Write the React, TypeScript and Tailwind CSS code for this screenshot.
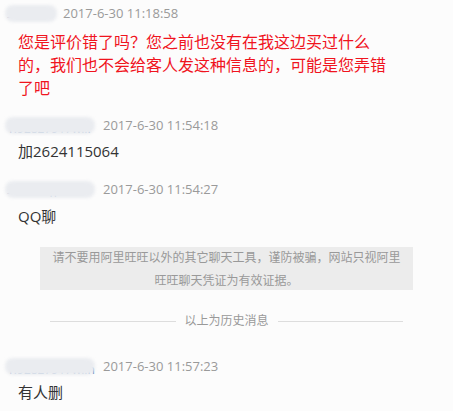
import React from "react";

const font = { fontFamily: '"Open Sans", "Noto Sans CJK SC", sans-serif' };

function Name({ wide, peek }: { wide: boolean; peek: string }) {
  return (
    <div className={`relative h-[28px] ${wide ? "w-[96px]" : "w-[56px]"} shrink-0`}>
      <div className="absolute left-[5px] bottom-[4px] text-[12px] leading-[14px] text-[#5b7fb5] whitespace-nowrap">
        {peek}
      </div>
      <div
        className={`absolute left-[3px] top-[5px] h-[17px] ${wide ? "w-[90px]" : "w-[52px]"} rounded-[8px] bg-[#eaecf0] blur-[1.5px]`}
      />
    </div>
  );
}

function Header({ wide, peek, time }: { wide: boolean; peek: string; time: string }) {
  return (
    <div className="flex items-center h-[28px] pl-[2px]">
      <Name wide={wide} peek={peek} />
      <span className="ml-[5px] text-[13px] text-[#9a9a9a]">{time}</span>
    </div>
  );
}

export default function App() {
  return (
    <div className="w-[453px] h-[411px] bg-[#fcfcfc] overflow-hidden" style={font}>
      <Header wide={false} peek="—— " time="2017-6-30 11:18:58" />
      <div className="mt-[3px] pl-[18px] text-[16px] leading-[23px] text-[#f0141e] whitespace-nowrap">
        <div>您是评价错了吗？您之前也没有在我这边买过什么</div>
        <div>的，我们也不会给客人发这种信息的，可能是您弄错</div>
        <div>了吧</div>
      </div>

      <div className="mt-[12px]">
        <Header wide={true} peek="1.92827917w..." time="2017-6-30 11:54:18" />
        <div className="pl-[18px] text-[15px] leading-[23px] text-[#333]">加2624115064</div>
      </div>

      <div className="mt-[13px]">
        <Header wide={true} peek="-----------n" time="2017-6-30 11:54:27" />
        <div className="mt-[1px] pl-[18px] text-[15px] leading-[23px] text-[#333]">QQ聊</div>
      </div>

      <div className="mt-[19px] mx-[40px] h-[43px] bg-[#ececec] flex flex-col justify-center items-center text-center text-[12px] leading-[23px] text-[#999]">
        <div>请不要用阿里旺旺以外的其它聊天工具，谨防被骗，网站只视阿里</div>
        <div>旺旺聊天凭证为有效证据。</div>
      </div>

      <div className="mt-[20px] flex items-center px-[50px] h-[22px]">
        <div className="flex-1 h-px bg-[#dddddd]" />
        <span className="px-[9px] text-[12px] text-[#999]">以上为历史消息</span>
        <div className="flex-1 h-px bg-[#dddddd]" />
      </div>

      <div className="mt-[21px]">
        <Header wide={true} peek="1.92827917w..n" time="2017-6-30 11:57:23" />
        <div className="pl-[18px] text-[15px] leading-[23px] text-[#333]">有人删</div>
      </div>
    </div>
  );
}
